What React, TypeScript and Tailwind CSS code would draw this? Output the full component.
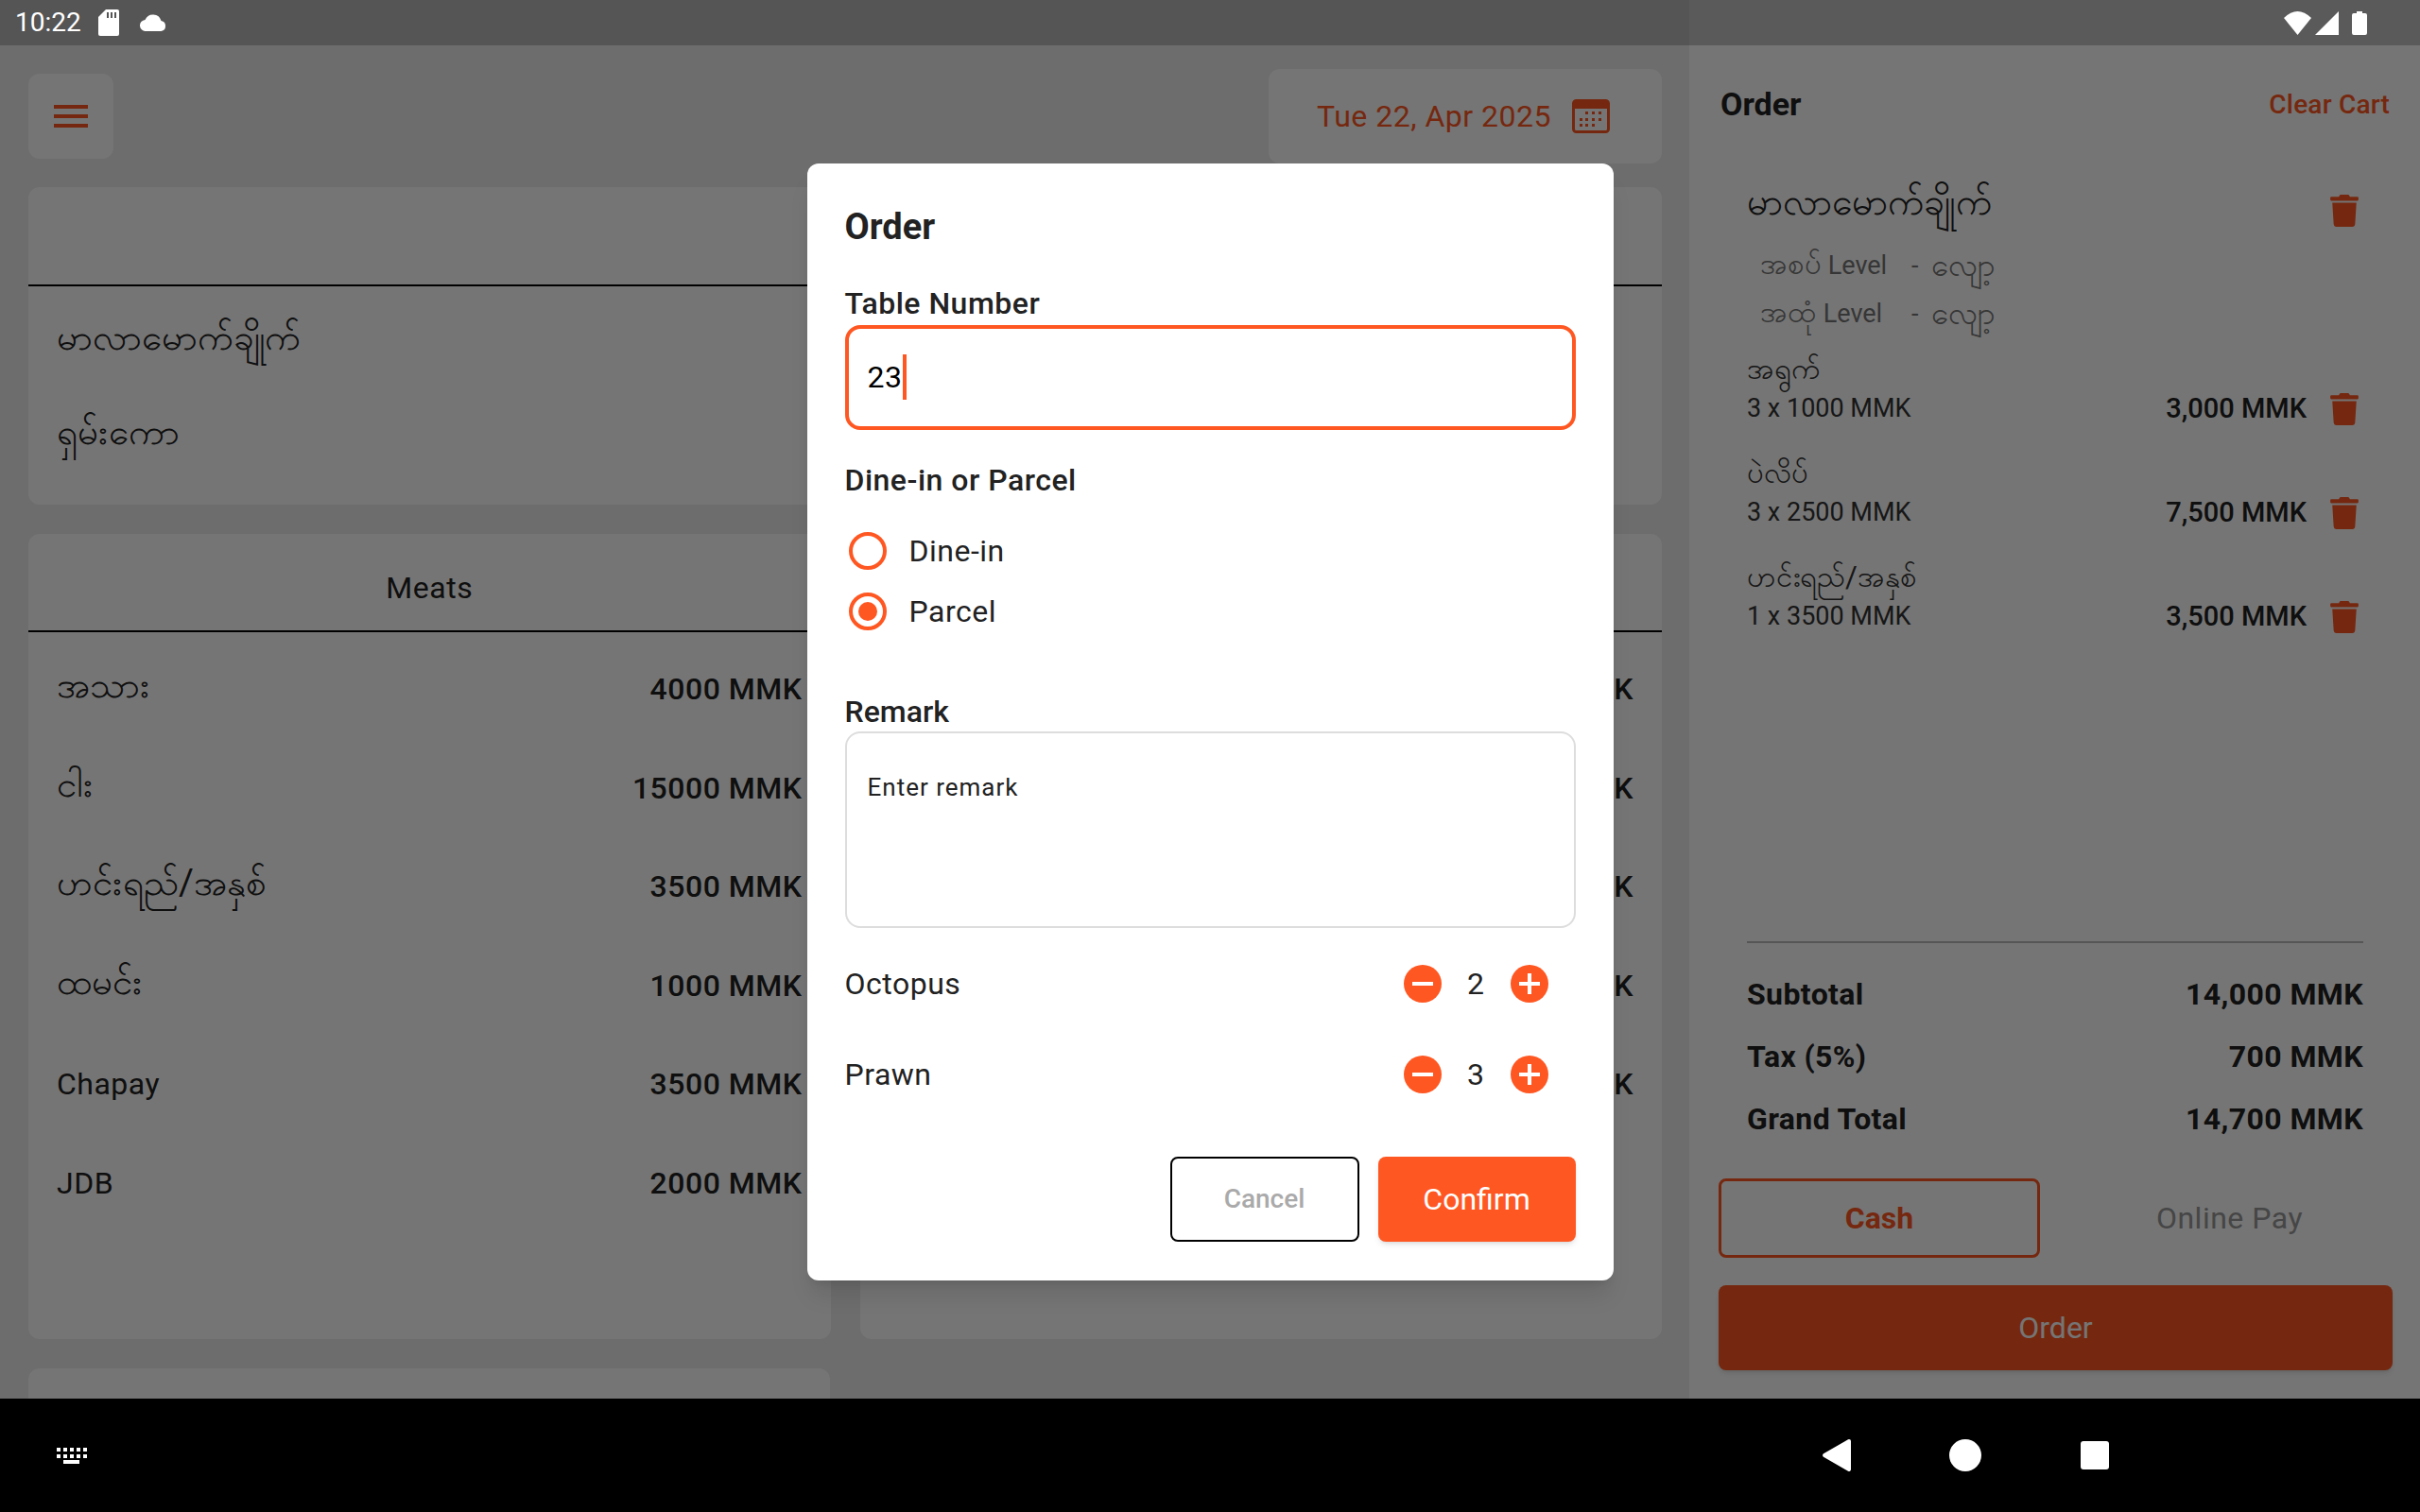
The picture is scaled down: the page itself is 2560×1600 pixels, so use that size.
import { FaTrash } from "react-icons/fa";

const font = "font-['Roboto','Noto_Sans',sans-serif]";

type Row = { name: string; price: string; mm?: boolean };

const meats: Row[] = [
  { name: "အသား", price: "4000 MMK", mm: true },
  { name: "ငါး", price: "15000 MMK", mm: true },
  { name: "ဟင်းရည်/အနှစ်", price: "3500 MMK", mm: true },
  { name: "ထမင်း", price: "1000 MMK", mm: true },
  { name: "Chapay", price: "3500 MMK" },
  { name: "JDB", price: "2000 MMK" },
];

const sideRows: Row[] = [
  { name: "", price: "2000 MMK" },
  { name: "", price: "3000 MMK" },
  { name: "", price: "2500 MMK" },
  { name: "", price: "1500 MMK" },
  { name: "", price: "1000 MMK" },
];

const cartLines = [
  { name: "အရွက်", qty: "3 x 1000 MMK", total: "3,000 MMK" },
  { name: "ပဲလိပ်", qty: "3 x 2500 MMK", total: "7,500 MMK" },
  { name: "ဟင်းရည်/အနှစ်", qty: "1 x 3500 MMK", total: "3,500 MMK" },
];

function StatusBar() {
  return (
    <div className="flex h-12 shrink-0 bg-[#555555] text-white">
      <div className="flex w-[1787px] items-center pl-4">
        <span className="text-[28px] leading-none">10:22</span>
        <svg className="ml-[18px] h-7 w-[22px]" viewBox="0 0 22 28" fill="white">
          <path d="M8 0h12a2 2 0 0 1 2 2v24a2 2 0 0 1-2 2H2a2 2 0 0 1-2-2V8z" />
          <path d="M9 3h2v6H9zM13 3h2v6h-2zM17 3h2v6h-2z" fill="#555555" />
        </svg>
        <svg className="ml-[21px] h-[18px] w-[31px]" viewBox="0 0 30 18" fill="white">
          <path d="M7 18a6 6 0 0 1-1-12A9 9 0 0 1 23 7a5.600 5.600 0 0 1 0 11z" />
        </svg>
      </div>
      <div className="flex flex-1 items-center justify-end bg-[#5a5a5a] pr-[56px]">
        <svg className="h-[25px] w-[29px]" viewBox="0 0 29 25" fill="white">
          <path d="M14.500 25 0 7Q14.500-7 29 7z" />
        </svg>
        <svg className="ml-1 h-[25px] w-[25px]" viewBox="0 0 25 25" fill="white">
          <path d="M25 0v25H0z" />
        </svg>
        <svg className="ml-[14px] h-[25px] w-4" viewBox="0 0 16 25" fill="white">
          <path d="M5 0h6v2h3a2 2 0 0 1 2 2v19a2 2 0 0 1-2 2H2a2 2 0 0 1-2-2V4a2 2 0 0 1 2-2h3z" />
        </svg>
      </div>
    </div>
  );
}

function NavBar() {
  return (
    <div className="flex h-[120px] shrink-0 items-center justify-between bg-black pl-[60px] pr-[329px]">
      <svg className="h-[17px] w-8" viewBox="0 0 32 17" fill="white">
        <path d="M0 0h4v4H0zM7 0h4v4H7zM14 0h4v4h-4zM21 0h4v4h-4zM28 0h4v4h-4zM0 7h4v4H0zM7 7h4v4H7zM14 7h4v4h-4zM21 7h4v4h-4zM28 7h4v4h-4zM7 13h17v4H7z" />
      </svg>
      <div className="flex items-center">
        <svg className="h-[34px] w-[30px]" viewBox="0 0 30 34" fill="white">
          <path d="M28 0a2 2 0 0 1 2 2v30a2 2 0 0 1-3 1.700L1 18.700a2 2 0 0 1 0-3.400L27 .3z" />
        </svg>
        <div className="ml-[104px] h-[34px] w-[34px] rounded-full bg-white" />
        <div className="ml-[105px] h-[30px] w-[30px] rounded-[3px] bg-white" />
      </div>
    </div>
  );
}

function MenuCard({ title, rows, className, headClass, rowClass, listClass }: { title: string; rows: Row[]; className: string; headClass: string; rowClass: string; listClass: string }) {
  return (
    <div className={`rounded-xl bg-white ${className}`}>
      <div className={`flex items-center justify-center border-b-2 border-black pt-3 text-[32px] tracking-[0.5px] text-[#222222] ${headClass}`}>
        {title}
      </div>
      <div className={`flex flex-col px-[30px] ${listClass}`}>
        {rows.map((row, i) => (
          <div key={i} className={`flex items-center justify-between ${rowClass}`}>
            <span className={row.mm ? "pb-[8px] text-[38.500px] leading-[60px] text-[#222222]" : "text-[32px] tracking-[0.5px] text-[#222222]"}>{row.name}</span>
            <span className="text-[32px] font-medium tracking-[0.5px] text-[#222222]">{row.price}</span>
          </div>
        ))}
      </div>
    </div>
  );
}

function LeftPane() {
  return (
    <div className="flex w-[1787px] flex-col gap-[31px] overflow-hidden bg-[#eeeeee] pl-[30px] pr-[29px] pt-[24px]">
      <div className="flex h-[95px] shrink-0 items-start justify-between">
        <div className="mt-[6px] flex h-[90px] w-[90px] items-center justify-center rounded-xl bg-white">
          <svg className="h-6 w-9" viewBox="0 0 36 24" fill="#ff5722">
            <path d="M0 0h36v4H0zM0 10h36v4H0zM0 20h36v4H0z" />
          </svg>
        </div>
        <div className="mt-[1px] flex h-[100px] w-[416px] items-center justify-center gap-[22px] rounded-xl bg-white pr-1 text-[32px] tracking-[0.5px] text-[#ff5722]">
          <span>Tue 22, Apr 2025</span>
          <svg className="h-9 w-10" viewBox="0 0 40 36" fill="none">
            <rect x="1.500" y="1.500" width="37" height="33" rx="3" stroke="#ff5722" strokeWidth="3" />
            <path d="M2 2h36v8H2z" fill="#ff5722" />
            <path d="M14 13h3v3h-3zM21 13h3v3h-3zM28 13h3v3h-3zM8 20h3v3H8zM14 20h3v3h-3zM21 20h3v3h-3zM28 20h3v3h-3zM8 26h3v3H8zM14 26h3v3h-3zM21 26h3v3h-3z" fill="#ff5722" />
          </svg>
        </div>
      </div>
      <div className="grid shrink-0 grid-cols-2 gap-[31px]">
        <MenuCard
          title=""
          className="h-[336px]"
          headClass="h-[105px]"
          rowClass="h-[100px]"
          listClass="pt-[8px]"
          rows={[
            { name: "မာလာမောက်ချိုက်", price: "", mm: true },
            { name: "ရှမ်းကော", price: "", mm: true },
          ]}
        />
        <MenuCard title="" className="h-[336px]" headClass="h-[105px]" rowClass="h-[100px]" listClass="pt-[8px]" rows={[]} />
      </div>
      <div className="grid shrink-0 grid-cols-2 gap-[31px]">
        <MenuCard title="Meats" className="h-[852px]" headClass="h-[104px]" rowClass="h-[104.500px]" listClass="pt-[8px]" rows={meats} />
        <MenuCard title="" className="h-[852px]" headClass="h-[104px]" rowClass="h-[104.500px]" listClass="pt-[8px]" rows={sideRows} />
      </div>
      <div className="h-[60px] w-[848px] shrink-0 rounded-xl bg-white" />
    </div>
  );
}

function LevelRow({ label, value }: { label: string; value: string }) {
  return (
    <div className="flex items-center text-[27px] leading-[50px] text-[#777777]">
      <div className="w-[160px]">
        <span className="text-[31px]">{label}</span> Level
      </div>
      <span>-</span>
      <span className="ml-[14px] text-[33px]">{value}</span>
    </div>
  );
}

function CartPane() {
  return (
    <div className="flex flex-1 flex-col bg-white pl-[31px] pr-[29px]">
      <div className="mt-[37px] flex items-center justify-between pl-[2px] pr-[3px]">
        <span className="text-[34px] font-bold text-[#222222]">Order</span>
        <span className="text-[28px] font-medium tracking-[0.2px] text-[#ff5722]">Clear Cart</span>
      </div>
      <div className="mt-[50px] flex flex-1 flex-col pl-[30px] pr-[36px]">
        <div className="flex items-center justify-between">
          <span className="text-[39px] leading-[56px] text-[#222222]">မာလာမောက်ချိုက်</span>
          <FaTrash className="mt-[18px] h-[34px] w-[30px] text-[#ff5722]" />
        </div>
        <div className="mt-[13px] pl-[14px]">
          <LevelRow label="အစပ်" value="လျော့" />
          <LevelRow label="အထုံ" value="လျော့" />
        </div>
        {cartLines.map((line, i) => (
          <div key={line.name} className={`flex items-end justify-between ${i === 0 ? "mt-[13px]" : "mt-[26px]"}`}>
            <div className="flex flex-col text-[#333333]">
              <span className="text-[31px] leading-[41px]">{line.name}</span>
              <span className="text-[27px] leading-[43px]">{line.qty}</span>
            </div>
            <div className="flex h-[43px] items-center gap-[25px]">
              <span className="text-[29px] font-medium text-[#222222]">{line.total}</span>
              <FaTrash className="h-[34px] w-[30px] text-[#ff5722]" />
            </div>
          </div>
        ))}
      </div>
      <div className="ml-[30px] mr-[31px] border-t-2 border-[#bbbbbb] pt-[21px]">
        {[
          ["Subtotal", "14,000 MMK"],
          ["Tax (5%)", "700 MMK"],
          ["Grand Total", "14,700 MMK"],
        ].map(([label, value]) => (
          <div key={label} className="flex h-[66px] items-center justify-between text-[32px] font-bold tracking-[0.4px] text-[#222222]">
            <span>{label}</span>
            <span>{value}</span>
          </div>
        ))}
      </div>
      <div className="mt-[30px] flex gap-[28px]">
        <div className="flex h-[84px] w-[340px] items-center justify-center rounded-lg border-[3px] border-[#ff5722] text-[32px] font-bold text-[#ff5722]">
          Cash
        </div>
        <div className="flex h-[84px] flex-1 items-center justify-center text-[32px] tracking-[0.5px] text-[#999999]">Online Pay</div>
      </div>
      <div className="mb-[30px] mt-[29px] flex h-[90px] items-center justify-center rounded-lg bg-[#ff5722] text-[32px] text-white shadow-md">
        Order
      </div>
    </div>
  );
}

function Stepper({ label, value }: { label: string; value: number }) {
  return (
    <div className="flex h-[96px] items-center justify-between">
      <span className="text-[32px] tracking-[0.5px] text-[#222222]">{label}</span>
      <div className="mr-[29px] flex items-center">
        <StepButton sign="minus" />
        <span className="w-[73px] text-center text-[32px] text-[#222222]">{value}</span>
        <StepButton sign="plus" />
      </div>
    </div>
  );
}

function StepButton({ sign }: { sign: "minus" | "plus" }) {
  return (
    <div className="relative flex h-10 w-10 items-center justify-center rounded-full bg-[#ff5722]">
      <div className="h-1 w-[22px] bg-white" />
      {sign === "plus" && <div className="absolute h-[22px] w-1 bg-white" />}
    </div>
  );
}

function Radio({ label, checked }: { label: string; checked?: boolean }) {
  return (
    <div className="flex h-16 items-center gap-[24px] pl-[4px]">
      <div className="flex h-10 w-10 items-center justify-center rounded-full border-4 border-[#ff5722]">
        {checked && <div className="h-5 w-5 rounded-full bg-[#ff5722]" />}
      </div>
      <span className="text-[32px] tracking-[0.5px] text-[#222222]">{label}</span>
    </div>
  );
}

function OrderDialog() {
  return (
    <div className="flex h-[1182px] w-[853px] flex-col rounded-xl bg-white px-[40px] pt-[40px] shadow-xl">
      <h2 className="text-[38px] font-bold leading-[54px] text-[#222222]">Order</h2>
      <div className="mt-[32px] text-[32px] font-medium leading-[45px] tracking-[0.5px] text-[#222222]">Table Number</div>
      <div className="flex h-[111px] items-center rounded-2xl border-4 border-[#ff5722] pb-[2px] pl-[20px] text-[32px] tracking-[0.5px] text-black">
        23
        <div className="ml-[1px] h-12 w-1 bg-[#ff5722]" />
      </div>
      <div className="mt-[32px] text-[32px] font-medium leading-[42px] tracking-[0.5px] text-[#222222]">Dine-in or Parcel</div>
      <div className="mt-[22px] flex flex-col">
        <Radio label="Dine-in" />
        <Radio label="Parcel" checked />
      </div>
      <div className="mt-[53px] text-[32px] font-medium leading-[42px] text-[#222222]">Remark</div>
      <div className="h-[208px] rounded-2xl border-2 border-[#dddddd] px-[22px] pt-[38px] text-[26px] tracking-[1px] text-[#222222]">
        Enter remark
      </div>
      <div className="mt-[11px]">
        <Stepper label="Octopus" value={2} />
        <Stepper label="Prawn" value={3} />
      </div>
      <div className="mt-[39px] flex justify-end gap-[20px]">
        <div className="flex h-[90px] w-[200px] items-center justify-center rounded-lg border-2 border-black text-[28px] font-medium text-[#aaaaaa]">
          Cancel
        </div>
        <div className="flex h-[90px] w-[209px] items-center justify-center rounded-lg bg-[#ff5722] text-[32px] text-white shadow-md">
          Confirm
        </div>
      </div>
    </div>
  );
}

export default function App() {
  return (
    <div className={`flex h-[1600px] w-[2560px] flex-col overflow-hidden ${font}`}>
      <StatusBar />
      <div className="relative flex min-h-0 flex-1">
        <LeftPane />
        <CartPane />
        {/* scrim and dialog */}
        <div className="absolute inset-0 flex items-center justify-center bg-black/54">
          <OrderDialog />
        </div>
      </div>
      <NavBar />
    </div>
  );
}
